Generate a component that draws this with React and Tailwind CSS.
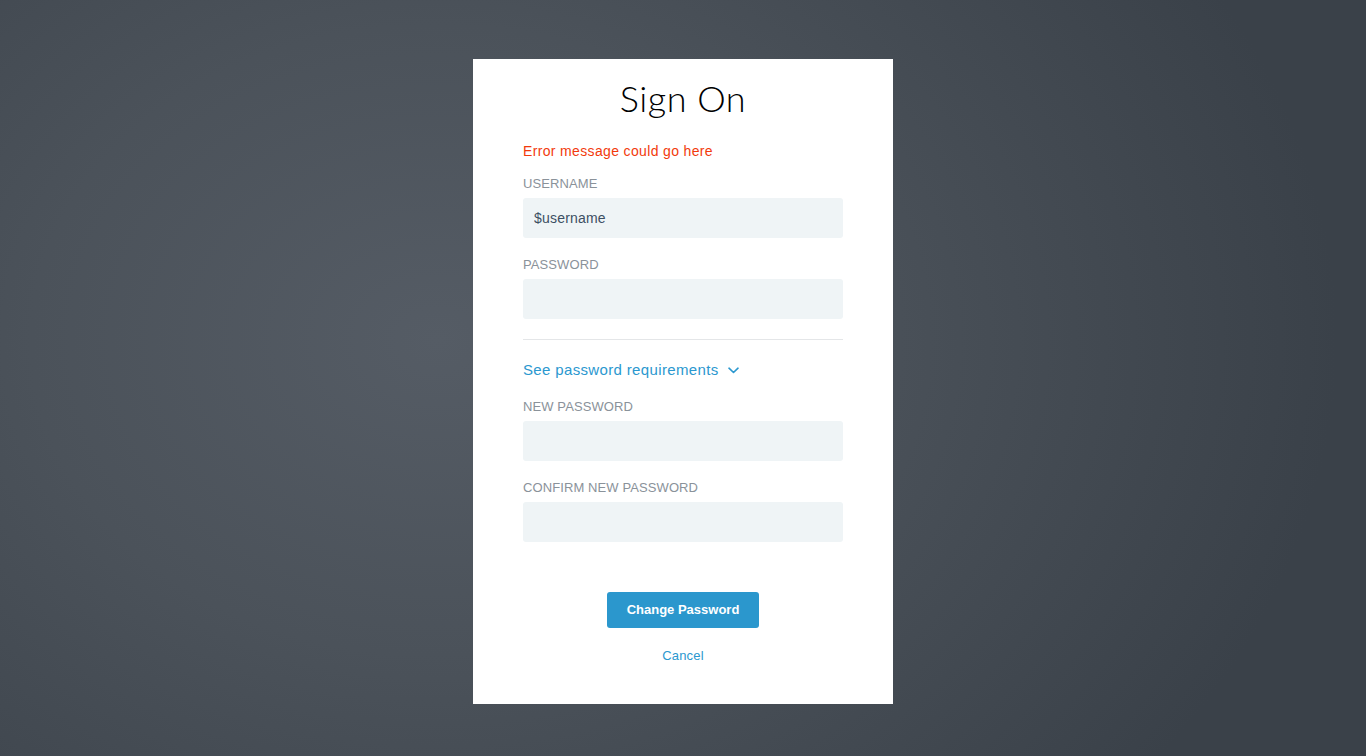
export default function App() {
  const label = "block text-[13px] leading-[16px] uppercase text-[#8a929a] tracking-[0.1px] font-['Liberation_Sans',Arial,sans-serif]";
  const input = "h-[40px] w-full rounded-[3px] bg-[#eff4f6] px-[11px] text-[14px] text-[#3c4f63] tracking-[0.2px] outline-none font-['Liberation_Sans',Arial,sans-serif]";
  return (
    <div className="min-h-[756px] w-full flex justify-center items-start pt-[59px] bg-[radial-gradient(ellipse_900px_700px_at_32%_45%,#555c65_0%,#4b525a_45%,#3a4149_100%)] font-['Liberation_Sans',Arial,sans-serif]">
      <div className="w-[420px] h-[645px] bg-white px-[50px] pt-[19px] flex flex-col">
        <h1 className="text-center text-[36px] leading-[40px] font-light text-black font-['Lato','Liberation_Sans',sans-serif] tracking-[0.5px]">Sign On</h1>
        <div className="mt-[23px] text-[14px] leading-[20px] text-[#f23a0c] tracking-[0.35px]">Error message could go here</div>
        <label className={label + " mt-[15px]"}>Username</label>
        <input className={input + " mt-[6px]"} defaultValue="$username" />
        <label className={label + " mt-[19px]"}>Password</label>
        <input type="password" className={input + " mt-[6px]"} />
        <div className="mt-[20px] h-px bg-[#e4e6e8]" />
        <button className="mt-[20px] flex items-center gap-[9px] text-[15px] leading-[20px] text-[#2b98cf] tracking-[0.35px] self-start">
          <span>See password requirements</span>
          <svg width="11" height="7" viewBox="0 0 11 7" fill="none" stroke="#2b98cf" strokeWidth="1.6" strokeLinecap="round" strokeLinejoin="round">
            <path d="M1 1.2l4.5 4.3 4.5-4.3" />
          </svg>
        </button>
        <label className={label + " mt-[19px]"}>New Password</label>
        <input type="password" className={input + " mt-[6px]"} />
        <label className={label + " mt-[19px]"}>Confirm New Password</label>
        <input type="password" className={input + " mt-[6px]"} />
        <button className="mt-[50px] self-center w-[152px] h-[36px] rounded-[3px] bg-[#2b97cd] text-white text-[13px] font-bold">Change Password</button>
        <button className="mt-[20px] self-center text-[13px] leading-[16px] text-[#2b98cf] tracking-[0.2px]">Cancel</button>
      </div>
    </div>
  );
}
